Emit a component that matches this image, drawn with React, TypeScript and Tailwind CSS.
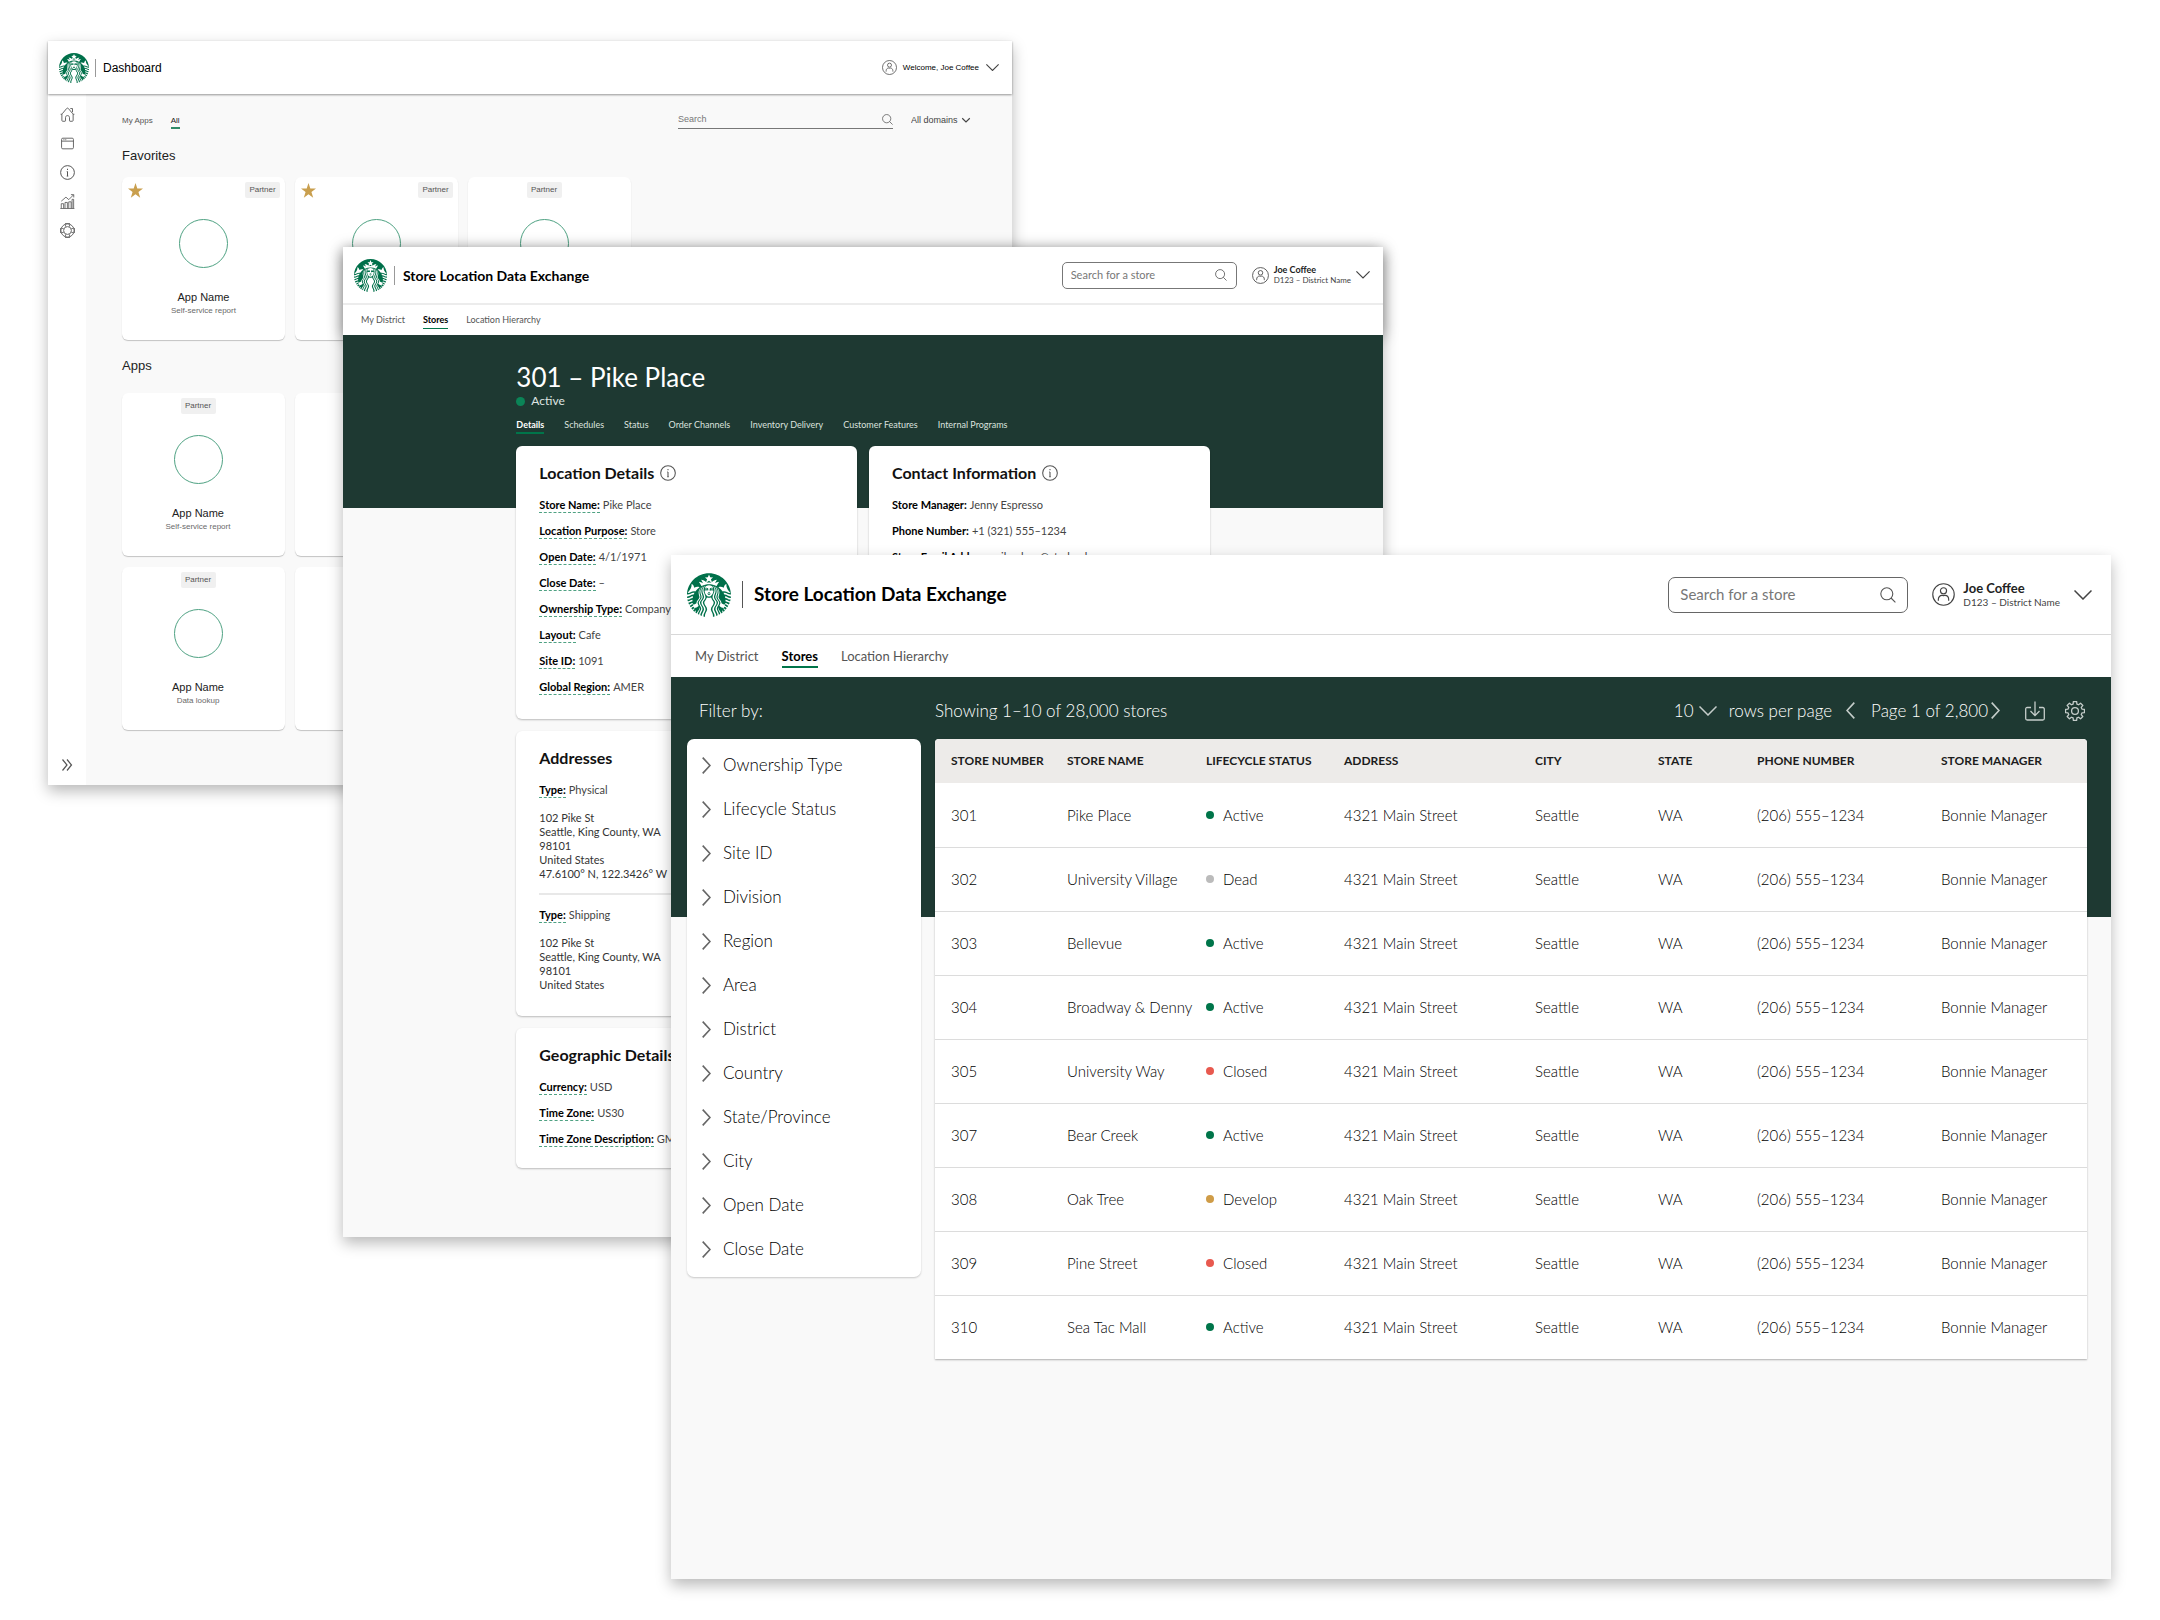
import React from "react";
import { SiStarbucks } from "react-icons/si";

type IconProps = { className?: string };

function Svg({ className, children, box = 24, weight = 1.3 }: IconProps & { children: React.ReactNode; box?: number; weight?: number }) {
  return (
    <svg viewBox={`0 0 ${box} ${box}`} className={className} fill="none" stroke="currentColor" strokeWidth={weight} aria-hidden="true">
      {children}
    </svg>
  );
}

const ChevronDown = ({ className, weight = 1.5 }: IconProps & { weight?: number }) => (
  <svg viewBox="0 0 18 10" className={className} fill="none" stroke="currentColor" strokeWidth={weight} aria-hidden="true">
    <path d="M0.5 0.5 9 9 17.5 0.5" />
  </svg>
);

const ChevronSide = ({ className, left = false }: IconProps & { left?: boolean }) => (
  <svg viewBox="0 0 9 17" className={className} fill="none" stroke="currentColor" strokeWidth={1.6} aria-hidden="true">
    <path d={left ? "M8.3 0.6 1 8.5l7.3 7.9" : "M0.7 0.6 8 8.5 0.7 16.4"} />
  </svg>
);

const SearchIcon = ({ className }: IconProps) => (
  <Svg className={className} box={16} weight={1.1}>
    <circle cx="6.8" cy="6.8" r="6" />
    <path d="m11 11 4.4 4.4" />
  </Svg>
);

const UserIcon = ({ className }: IconProps) => (
  <Svg className={className} weight={1.2}>
    <circle cx="12" cy="12" r="11.2" />
    <circle cx="12" cy="8.2" r="3.2" />
    <path d="M6.6 18.6v-1.4c0-2.6 1.8-4.3 3.8-4.3.7 0 .9.3 1.6.3s.9-.3 1.6-.3c2 0 3.8 1.7 3.8 4.3v1.4" />
  </Svg>
);

const InfoIcon = ({ className }: IconProps) => (
  <Svg className={className} weight={1.6}>
    <circle cx="12" cy="12" r="11" />
    <path d="M12 10.5v7.2M12 6v2M10.8 17.7h2.4M10.8 10.5H12" />
  </Svg>
);

const HomeIcon = ({ className }: IconProps) => (
  <Svg className={className} weight={1.4}>
    <path d="M3 11v10.500c0 .8.5 1.300 1.200 1.300H8c.5 0 .8-.3.8-.8V17c0-2 1.300-3.300 3.200-3.300s3.200 1.300 3.200 3.300v5c0 .5.3.8.8.8h3.800c.7 0 1.200-.5 1.200-1.300V11" />
    <path d="M1 11.600c1.300.4 2-.2 2.800-1L10.600 2.400c.9-.9 1.900-.9 2.800 0l6.800 8.200c.8.8 1.500 1.400 2.800 1M16.500 2.500H20v5.800" />
  </Svg>
);

const WindowIcon = ({ className }: IconProps) => (
  <Svg className={className} weight={1.4}>
    <rect x="2.500" y="3.500" width="19" height="17" rx="2" />
    <path d="M2.500 8.200h19M5.500 5.900h1.500M8.500 5.900H10" />
  </Svg>
);

const ChartIcon = ({ className }: IconProps) => (
  <Svg className={className} weight={1.300}>
    <path d="M0.500 23.300h22.500M2 23v-7.500h3.800V23M8 23v-9.500h3.800V23M14 23V12.500h3.800V23M19.300 23V8.500h2.500V23" />
    <path d="M2 11.500 9.500 5l4.500 4L21.500 1.500M17.500 1h4.500v4.500" />
  </Svg>
);

const LifebuoyIcon = ({ className }: IconProps) => (
  <Svg className={className} weight={1.300}>
    <path d="M8 1h8M8 23h8M1 8v8M23 8v8" />
    <circle cx="12" cy="12" r="10.600" />
    <circle cx="12" cy="12" r="6.200" />
    <path d="M8 2.200 9.600 6.300M16 2.200 14.400 6.300M8 21.800l1.600-4.100M16 21.800l-1.600-4.100M2.200 8l4.100 1.600M2.200 16l4.100-1.600M21.800 8l-4.100 1.600M21.800 16l-4.100-1.600" />
  </Svg>
);

const DoubleChevron = ({ className }: IconProps) => (
  <Svg className={className} box={12} weight={1.200}>
    <path d="m1.500.5 4.500 5.500-4.500 5.500M6 .5 10.500 6 6 11.500" />
  </Svg>
);

const DownloadIcon = ({ className }: IconProps) => (
  <Svg className={className} box={20} weight={1.300}>
    <path d="M6 6.500H2.200C1.300 6.500.7 7 .7 8v9.500c0 1 .6 1.500 1.500 1.500h15.600c.9 0 1.500-.5 1.500-1.500V8c0-1-.6-1.500-1.500-1.500H14" />
    <path d="M10 .5v14M5.500 10l4.500 4.600L14.500 10" />
  </Svg>
);

const gearPath = (() => {
  const pts: string[] = [];
  for (let i = 0; i < 8; i++) {
    const mid = (i * Math.PI) / 4;
    const spots: [number, number][] = [[-0.27, 7.200], [-0.17, 9.600], [0.17, 9.600], [0.27, 7.200]];
    for (const [turn, radius] of spots) {
      pts.push(`${(10 + radius * Math.sin(mid + turn)).toFixed(2)} ${(10 - radius * Math.cos(mid + turn)).toFixed(2)}`);
    }
  }
  return `M${pts.join("L")}Z`;
})();

const GearIcon = ({ className }: IconProps) => (
  <Svg className={className} box={20} weight={1.300}>
    <path d={gearPath} strokeLinejoin="round" />
    <circle cx="10" cy="10" r="3.400" />
  </Svg>
);

const StarIcon = ({ className }: IconProps) => (
  <svg viewBox="0 0 24 24" className={className} fill="currentColor" aria-hidden="true">
    <path d="m12 0 2.900 8.900H24l-7.300 5.500L19.500 23.500 12 18l-7.500 5.500 2.800-9.100L0 8.900h9.100z" />
  </svg>
);

/* ------------------------------ Dashboard ------------------------------ */

type AppCardProps = { kind: string; favorite?: boolean; shifted?: boolean };

function AppCard({ kind, favorite, shifted }: AppCardProps) {
  return (
    <article className={`relative flex h-[163px] w-[163px] shrink-0 flex-col items-center rounded-md bg-white shadow-[0_1px_1px_rgba(0,0,0,0.22)] ${shifted ? "pr-[11px]" : ""}`}>
      <div className={`flex w-full items-center pt-[5px] ${favorite ? "justify-between pr-[5px] pl-[6px]" : "justify-center"}`}>
        {favorite && <StarIcon className="size-[15px] text-[#c99f4e]" />}
        <span className="flex h-4 w-[35px] items-center justify-center rounded-[2px] bg-[#f0f0f0] text-[8px] text-[#555]">Partner</span>
      </div>
      <div className="mt-[21px] size-[49px] shrink-0 rounded-full border border-[#4fa283]" />
      <h3 className="mt-[21px] text-[11px] leading-[16px] text-[#222]">App Name</h3>
      <p className="text-[8px] leading-[12px] text-[#6a6a6a]">{kind}</p>
    </article>
  );
}

function DashboardWindow() {
  const links = [
    { name: "Home", icon: HomeIcon },
    { name: "Applications", icon: WindowIcon },
    { name: "Information", icon: InfoIcon },
    { name: "Reports", icon: ChartIcon },
    { name: "Support", icon: LifebuoyIcon },
  ];
  return (
    <section className="absolute top-[41px] left-12 flex min-h-[744px] w-[44.63%] flex-col bg-[#f9f9f9] font-['Liberation_Sans',sans-serif] shadow-[0_6px_14px_rgba(0,0,0,0.28)]">
      <header className="relative flex h-[53px] items-center bg-white pr-[13px] pl-[11px] shadow-[0_1px_2px_rgba(0,0,0,0.4)]">
        <SiStarbucks className="size-[30px] text-[#00704a]" />
        <span className="ml-[6px] h-[18px] w-px bg-[#999]" />
        <h1 className="ml-[7px] text-[12px] font-medium text-black">Dashboard</h1>
        <button className="ml-auto flex items-center text-[#444]">
          <UserIcon className="size-[15px]" />
          <span className="mr-[7px] ml-[6px] text-[8px] text-black">Welcome, Joe Coffee</span>
          <ChevronDown className="w-[13px]" />
        </button>
      </header>
      <div className="flex flex-1">
        <nav className="flex w-[38px] flex-col items-center gap-[14px] bg-white pt-[13px] pb-[14px] text-[#555]" aria-label="Main">
          {links.map(({ name, icon: Icon }) => (
            <a key={name} href="#" aria-label={name}>
              <Icon className="size-[15px]" />
            </a>
          ))}
          <button className="mt-auto" aria-label="Expand menu">
            <DoubleChevron className="size-[12px]" />
          </button>
        </nav>
        <main className="flex-1 pr-[42px] pl-[36px]">
          <div className="flex items-center pt-[17px]">
            <div className="flex gap-[18px] text-[8px] leading-[12px]">
              <a href="#" className="pt-[4px] text-[#555]">My Apps</a>
              <a href="#" className="border-b-2 border-[#2f8a68] pt-[4px] text-[#222]">All</a>
            </div>
            <label className="ml-auto flex h-[18px] w-[215px] items-center border-b border-[#777] text-[#555]">
              <input type="search" aria-label="Search apps" placeholder="Search" className="min-w-0 flex-1 bg-transparent text-[9px] outline-none placeholder:text-[#777]" />
              <SearchIcon className="size-[11px]" />
            </label>
            <div className="ml-[18px] flex items-center text-[#444]">
              <select aria-label="Domain" className="w-[51px] appearance-none bg-transparent text-[9px] leading-[12px]">
                <option>All domains</option>
              </select>
              <ChevronDown weight={2.6} className="w-[8px] overflow-visible" />
            </div>
          </div>
          <h2 className="mt-[19px] text-[13px] leading-[16px] text-[#222]">Favorites</h2>
          <div className="mt-[13px] flex gap-[10px]">
            <AppCard kind="Self-service report" favorite />
            <AppCard kind="Self-service report" favorite />
            <AppCard kind="Self-service report" shifted />
          </div>
          <h2 className="mt-[18px] text-[13px] leading-[16px] text-[#222]">Apps</h2>
          <div className="mt-[19px] flex gap-[10px]">
            <AppCard kind="Self-service report" shifted />
            <AppCard kind="Data lookup" />
          </div>
          <div className="mt-[11px] flex gap-[10px]">
            <AppCard kind="Data lookup" shifted />
            <AppCard kind="Data lookup" />
          </div>
        </main>
      </div>
    </section>
  );
}

/* ---------------------------- Store details ---------------------------- */

function Field({ label, value, hint = false }: { label: string; value: string; hint?: boolean }) {
  return (
    <div className="flex h-[26px] items-center gap-[3px] text-[11px] leading-[14px] whitespace-nowrap">
      <dt className={`font-bold text-black ${hint ? "border-b border-dashed border-[#4fa283]" : ""}`}>{label}:</dt>
      <dd className="text-[#444]">{value}</dd>
    </div>
  );
}

function DetailCard({ title, info, className, children }: { title: string; info?: boolean; className: string; children: React.ReactNode }) {
  return (
    <article className={`rounded-md bg-white px-[23px] pt-[15px] shadow-[0_1px_2px_rgba(0,0,0,0.25)] ${className}`}>
      <h2 className="mb-[7px] flex items-center gap-[6px] text-[16px] leading-[24px] font-bold text-[#111]">
        {title}
        {info && <InfoIcon className="size-[16px] text-[#555]" />}
      </h2>
      {children}
    </article>
  );
}

function StoreDetailsWindow() {
  const tabs = ["Details", "Schedules", "Status", "Order Channels", "Inventory Delivery", "Customer Features", "Internal Programs"];
  return (
    <section className="absolute top-[247px] left-[343px] min-h-[990px] w-[48.15%] bg-[#f9f9f9] font-['Lato',sans-serif] shadow-[0_6px_14px_rgba(0,0,0,0.28)]">
      <div className="bg-white shadow-[0_2px_14px_rgba(0,0,0,0.4)]">
        <header className="flex h-[58px] items-center border-b-2 border-[#ececec] pr-[13px] pl-[11px]">
          <SiStarbucks className="size-[33px] text-[#00704a]" />
          <span className="ml-[7px] h-[19px] w-px bg-[#999]" />
          <h1 className="ml-[8px] text-[14px] font-bold text-black">Store Location Data Exchange</h1>
          <label className="ml-auto flex h-[27px] w-[175px] items-center rounded-[5px] border border-[#777] pr-[9px] pl-[8px] text-[#555]">
            <input type="search" aria-label="Search for a store" placeholder="Search for a store" className="min-w-0 flex-1 bg-transparent text-[11px] outline-none placeholder:text-[#777]" />
            <SearchIcon className="size-[12px]" />
          </label>
          <button className="ml-[15px] flex items-center text-left text-[#444]">
            <UserIcon className="size-[17px]" />
            <span className="mr-[5px] ml-[5px] flex flex-col whitespace-nowrap">
              <span className="text-[9px] leading-[10px] font-bold text-[#222]">Joe Coffee</span>
              <span className="text-[8px] leading-[10px] text-[#444]">D123 – District Name</span>
            </span>
            <ChevronDown className="w-[14px]" />
          </button>
        </header>
        <nav className="flex h-[30px] items-center gap-[18px] px-[18px] text-[9px] leading-[12px] text-[#555]" aria-label="Sections">
          <a href="#">My District</a>
          <a href="#" className="relative font-bold text-black after:absolute after:inset-x-0 after:top-[14px] after:h-px after:bg-[#00754a]">Stores</a>
          <a href="#">Location Hierarchy</a>
        </nav>
      </div>
      <div className="relative h-[173px] bg-[#1e3932]">
        <div className="mx-auto w-2/3 pt-[25px] text-white">
          <h1 className="text-[26px] leading-[34px]">301 – Pike Place</h1>
          <p className="flex items-center gap-[6px] text-[12px] leading-[14px] text-[#dfe5e3]">
            <span className="size-[9px] rounded-full bg-[#0b8457]" />
            Active
          </p>
          <nav className="mt-[9px] flex gap-[20px] text-[9px] leading-[15px] whitespace-nowrap text-[#dbe1df]" aria-label="Store sections">
            {tabs.map((tab, i) => (
              <a key={tab} href="#" className={i === 0 ? "border-b-2 border-[#00754a] font-bold text-white" : ""}>
                {tab}
              </a>
            ))}
          </nav>
        </div>
      </div>
      <main className="relative mx-auto -mt-[62px] grid w-2/3 grid-cols-2 items-start gap-[12px]">
        <div className="flex flex-col gap-[12px]">
          <DetailCard title="Location Details" info className="pb-[19px]">
            <dl>
              <Field hint label="Store Name" value="Pike Place" />
              <Field hint label="Location Purpose" value="Store" />
              <Field hint label="Open Date" value="4/1/1971" />
              <Field hint label="Close Date" value="–" />
              <Field hint label="Ownership Type" value="Company" />
              <Field hint label="Layout" value="Cafe" />
              <Field hint label="Site ID" value="1091" />
              <Field hint label="Global Region" value="AMER" />
            </dl>
          </DetailCard>
          <DetailCard title="Addresses" className="pb-[24px]">
            <dl>
              <Field hint label="Type" value="Physical" />
            </dl>
            <address className="mt-2 text-[11px] leading-[14px] text-[#333] not-italic">
              102 Pike St<br />Seattle, King County, WA<br />98101<br />United States<br />47.6100° N, 122.3426° W
            </address>
            <hr className="mt-[12px] mb-[7px] border-t-2 border-[#e8e8e8]" />
            <dl>
              <Field hint label="Type" value="Shipping" />
            </dl>
            <address className="mt-2 text-[11px] leading-[14px] text-[#333] not-italic">
              102 Pike St<br />Seattle, King County, WA<br />98101<br />United States
            </address>
          </DetailCard>
          <DetailCard title="Geographic Details" className="pb-[16px]">
            <dl>
              <Field hint label="Currency" value="USD" />
              <Field hint label="Time Zone" value="US30" />
              <Field hint label="Time Zone Description" value="GMT" />
            </dl>
          </DetailCard>
        </div>
        <DetailCard title="Contact Information" info className="pb-[19px]">
          <dl>
            <Field label="Store Manager" value="Jenny Espresso" />
            <Field label="Phone Number" value="+1 (321) 555–1234" />
            <Field label="Store Email Address" value="pikeplace@starbucks.com" />
          </dl>
        </DetailCard>
      </main>
    </section>
  );
}

/* ------------------------------ Store list ------------------------------ */

const filters = [
  "Ownership Type", "Lifecycle Status", "Site ID", "Division", "Region", "Area",
  "District", "Country", "State/Province", "City", "Open Date", "Close Date",
];

const dots: Record<string, string> = {
  Active: "bg-[#00754a]",
  Dead: "bg-[#bbbbbb]",
  Closed: "bg-[#e8594f]",
  Develop: "bg-[#cf9c47]",
};

const stores: [string, string, string][] = [
  ["301", "Pike Place", "Active"],
  ["302", "University Village", "Dead"],
  ["303", "Bellevue", "Active"],
  ["304", "Broadway & Denny", "Active"],
  ["305", "University Way", "Closed"],
  ["307", "Bear Creek", "Active"],
  ["308", "Oak Tree", "Develop"],
  ["309", "Pine Street", "Closed"],
  ["310", "Sea Tac Mall", "Active"],
];

const columns = [
  { name: "STORE NUMBER", width: "w-[116px]" },
  { name: "STORE NAME", width: "w-[139px]" },
  { name: "LIFECYCLE STATUS", width: "w-[138px]" },
  { name: "ADDRESS", width: "w-[191px]" },
  { name: "CITY", width: "w-[123px]" },
  { name: "STATE", width: "w-[99px]" },
  { name: "PHONE NUMBER", width: "w-[184px]" },
  { name: "STORE MANAGER", width: "w-[162px]" },
];

function StoreListWindow() {
  return (
    <section className="absolute top-[555px] right-[49px] min-h-[1024px] w-2/3 bg-[#f9f9f9] font-['Lato',sans-serif] shadow-[0_6px_14px_rgba(0,0,0,0.28)]">
      <header className="flex h-[80px] items-center border-b border-[#d8d8d8] bg-white pr-[19px] pl-4">
        <SiStarbucks className="size-[44px] text-[#00704a]" />
        <span className="ml-[11px] h-[27px] w-px bg-[#555]" />
        <h1 className="ml-[11px] text-[19px] font-bold text-black">Store Location Data Exchange</h1>
        <label className="ml-auto flex h-[36px] w-[240px] items-center rounded-[7px] border border-[#666] pr-[11px] pl-[11px] text-[#555]">
          <input type="search" aria-label="Search for a store" placeholder="Search for a store" className="min-w-0 flex-1 bg-transparent text-[15px] outline-none placeholder:text-[#777]" />
          <SearchIcon className="size-[16px]" />
        </label>
        <button className="ml-[24px] flex items-center text-left text-[#444]">
          <UserIcon className="size-[23px]" />
          <span className="mr-[14px] ml-[8px] flex flex-col whitespace-nowrap">
            <span className="text-[13px] leading-[14px] font-bold text-[#222]">Joe Coffee</span>
            <span className="text-[10px] leading-[14px] text-[#444]">D123 – District Name</span>
          </span>
          <ChevronDown className="w-[18px]" />
        </button>
      </header>
      <nav className="flex h-[42px] items-center gap-[23px] bg-white px-[24px] text-[13px] leading-[16px] text-[#555]" aria-label="Sections">
        <a href="#">My District</a>
        <a href="#" className="relative font-bold text-black after:absolute after:inset-x-0 after:top-[18px] after:h-[2px] after:bg-[#00754a]">Stores</a>
        <a href="#">Location Hierarchy</a>
      </nav>

      <div className="h-[240px] bg-[#1e3932] pr-[26px] pl-4 text-[17px] leading-[20px] text-white">
        <div className="flex h-[67px] items-center whitespace-nowrap">
          <span className="w-[248px] pl-3 font-light">Filter by:</span>
          <span className="font-light">Showing 1–10 of 28,000 stores</span>
          <div className="ml-auto flex items-center">
            <label className="flex items-center font-light">
              <select aria-label="Rows per page" className="w-[25px] appearance-none bg-transparent text-[17px] font-light">
                <option>10</option>
              </select>
              <ChevronDown className="mr-[12px] w-[18px] text-[#c5cdca]" />
              rows per page
            </label>
            <button className="ml-[14px] text-[#c5cdca]" aria-label="Previous page">
              <ChevronSide left className="w-[9px]" />
            </button>
            <span className="ml-[16px] font-light">Page 1 of 2,800</span>
            <button className="ml-[3px] text-[#c5cdca]" aria-label="Next page">
              <ChevronSide className="w-[9px]" />
            </button>
            <button className="ml-[25px] text-[#c5cdca]" aria-label="Download">
              <DownloadIcon className="size-[20px]" />
            </button>
            <button className="ml-[20px] text-[#c5cdca]" aria-label="Settings">
              <GearIcon className="size-[20px]" />
            </button>
          </div>
        </div>
      </div>

      <main className="relative -mt-[178px] flex items-start gap-[14px] pr-6 pl-4">
        <aside className="w-[234px] shrink-0 rounded-[7px] bg-white pt-[4px] pb-[6px] shadow-[0_1px_2px_rgba(0,0,0,0.2)]" aria-label="Filters">
          {filters.map((name) => (
            <button key={name} aria-expanded="false" className="flex h-[44px] w-full items-center gap-3 pl-[15px] text-[17px] font-light text-black">
              <ChevronSide className="w-[9px] text-[#666]" />
              {name}
            </button>
          ))}
        </aside>
        <div className="min-w-0 flex-1 overflow-hidden rounded-t-[4px] bg-white shadow-[0_1px_2px_rgba(0,0,0,0.3)]">
          <table className="w-full table-fixed text-left whitespace-nowrap">
            <thead className="bg-[#edebe9] text-[12px] text-[#1c1c1c]">
              <tr className="h-[44px]">
                {columns.map((c) => (
                  <th key={c.name} className={`${c.width} pl-4 font-bold`}>{c.name}</th>
                ))}
              </tr>
            </thead>
            <tbody className="text-[15px] font-light text-black">
              {stores.map(([id, name, status]) => (
                <tr key={id} className="h-[64px] border-b border-[#dcdcdc] last:border-b-0">
                  <td className="pl-4">{id}</td>
                  <td className="pl-4">{name}</td>
                  <td className="pl-4">
                    <span className="flex items-center gap-[9px]">
                      <span className={`size-[8px] rounded-full ${dots[status]}`} />
                      {status}
                    </span>
                  </td>
                  <td className="pl-4">4321 Main Street</td>
                  <td className="pl-4">Seattle</td>
                  <td className="pl-4">WA</td>
                  <td className="pl-4">(206) 555–1234</td>
                  <td className="pl-4">Bonnie Manager</td>
                </tr>
              ))}
            </tbody>
          </table>
        </div>
      </main>
    </section>
  );
}

export default function App() {
  return (
    <div className="relative min-h-[1620px] w-full overflow-hidden bg-white">
      <DashboardWindow />
      <StoreDetailsWindow />
      <StoreListWindow />
    </div>
  );
}
